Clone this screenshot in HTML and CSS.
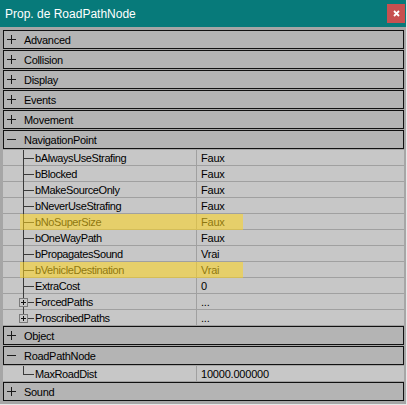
FILE: index.html
```html
<!DOCTYPE html>
<html lang="fr">
  <head>
    <meta charset="UTF-8" />
    <title>Prop. de RoadPathNode</title>
    <link rel="stylesheet" href="styles.css">
  </head>
  <body>
    <div class="window">
      <div class="titlebar">
        <span class="title">Prop. de RoadPathNode</span>
        <div class="closeBtn">
          <svg width="7" height="7" viewBox="0 0 7 7"><path d="M1 1L6 6M6 1L1 6" stroke="#fff" stroke-width="1.8"/></svg>
        </div>
      </div>

      <div class="grid">
        <div class="cat"><svg class="sign" width="9" height="9"><path d="M0 4.5H9M4.5 0V9"/></svg>Advanced</div>
        <div class="cat"><svg class="sign" width="9" height="9"><path d="M0 4.5H9M4.5 0V9"/></svg>Collision</div>
        <div class="cat"><svg class="sign" width="9" height="9"><path d="M0 4.5H9M4.5 0V9"/></svg>Display</div>
        <div class="cat"><svg class="sign" width="9" height="9"><path d="M0 4.5H9M4.5 0V9"/></svg>Events</div>
        <div class="cat"><svg class="sign" width="9" height="9"><path d="M0 4.5H9M4.5 0V9"/></svg>Movement</div>
        <div class="cat"><svg class="sign" width="9" height="9"><path d="M0 4.5H9"/></svg>NavigationPoint</div>

        <div class="prop"><div class="name">bAlwaysUseStrafing</div><div class="value">Faux</div></div>
        <div class="prop"><div class="name">bBlocked</div><div class="value">Faux</div></div>
        <div class="prop"><div class="name">bMakeSourceOnly</div><div class="value">Faux</div></div>
        <div class="prop"><div class="name">bNeverUseStrafing</div><div class="value">Faux</div></div>
        <div class="prop"><div class="name">bNoSuperSize</div><div class="value">Faux</div><span class="mark"></span></div>
        <div class="prop"><div class="name">bOneWayPath</div><div class="value">Faux</div></div>
        <div class="prop"><div class="name">bPropagatesSound</div><div class="value">Vrai</div></div>
        <div class="prop"><div class="name">bVehicleDestination</div><div class="value">Vrai</div><span class="mark"></span></div>
        <div class="prop"><div class="name">ExtraCost</div><div class="value">0</div></div>
        <div class="prop"><div class="name"><span class="expander"><svg width="5" height="5"><path d="M0 2.5H5M2.5 0V5"/></svg></span>ForcedPaths</div><div class="value">...</div></div>
        <div class="prop last"><div class="name"><span class="expander"><svg width="5" height="5"><path d="M0 2.5H5M2.5 0V5"/></svg></span>ProscribedPaths</div><div class="value">...</div></div>

        <div class="cat"><svg class="sign" width="9" height="9"><path d="M0 4.5H9M4.5 0V9"/></svg>Object</div>
        <div class="cat"><svg class="sign" width="9" height="9"><path d="M0 4.5H9"/></svg>RoadPathNode</div>

        <div class="prop last"><div class="name">MaxRoadDist</div><div class="value">10000.000000</div></div>

        <div class="cat"><svg class="sign" width="9" height="9"><path d="M0 4.5H9M4.5 0V9"/></svg>Sound</div>
      </div>
    </div>
  </body>
</html>
```

FILE: styles.css
```css
body {
  margin: 0;
  padding: 0;
  background-color: #a6a6a6;
}

.window {
  width: 407px;
  height: 405px;
  box-sizing: border-box;
  display: flex;
  flex-direction: column;
  background-color: #a6a6a6;
  border-right: 1px solid #e8e8e8;
  border-bottom: 1px solid #e8e8e8;
  font-family: 'Liberation Sans', arial, sans-serif;
  font-size: 11px;
  color: #000;
}

.titlebar {
  height: 27px;
  flex: none;
  display: flex;
  justify-content: space-between;
  align-items: flex-start;
  background-color: #077a7a;
  padding-left: 5px;
  box-sizing: border-box;
}

.title {
  font-family: 'Liberation Sans', arial, sans-serif;
  font-size: 12px;
  line-height: 27px;
  padding-top: 1px;
  color: #fff;
}

.closeBtn {
  width: 18px;
  height: 19px;
  margin-top: 4px;
  margin-right: 1px;
  background-color: #c75050;
  display: flex;
  justify-content: center;
  align-items: center;
}

.grid {
  margin: 3px 2px 0 3px;
  display: flex;
  flex-direction: column;
}

.cat {
  height: 19px;
  margin-bottom: 1px;
  box-sizing: border-box;
  border: 1px solid #111;
  background-color: #b4b4b4;
  display: flex;
  align-items: center;
  padding-left: 3px;
  gap: 8px;
  letter-spacing: -0.3px;
}

.sign {
  flex: none;
  shape-rendering: crispEdges;
}

.sign path {
  stroke: #1a1a1a;
  stroke-width: 1;
  fill: none;
}

.prop {
  position: relative;
  height: 16px;
  box-sizing: border-box;
  border-bottom: 1px solid #a0a0a0;
  background-color: #c7c7c7;
  display: grid;
  grid-template-columns: 193px 1fr;
  line-height: 15px;
}

.name,
.value {
  padding-top: 1px;
}

.name {
  position: relative;
  padding-left: 32px;
  letter-spacing: -0.4px;
  white-space: nowrap;
}

/* tree lines: vertical trunk and the branch to each item */
.name::before {
  content: '';
  position: absolute;
  left: 20px;
  top: 0;
  bottom: -1px;
  width: 1px;
  background-color: #3a3a3a;
}

.name::after {
  content: '';
  position: absolute;
  left: 20px;
  top: 8px;
  width: 11px;
  height: 1px;
  background-color: #3a3a3a;
}

.prop.last .name::before {
  bottom: 7px;
}

.expander {
  position: absolute;
  left: 16px;
  top: 4px;
  width: 9px;
  height: 9px;
  box-sizing: border-box;
  border: 1px solid #7a7a7a;
  background-color: #c7c7c7;
  display: flex;
  justify-content: center;
  align-items: center;
  z-index: 1;
}

.expander svg {
  shape-rendering: crispEdges;
}

.expander path {
  stroke: #111;
  stroke-width: 1;
}

.value {
  border-left: 1px solid #a0a0a0;
  padding-left: 4px;
  letter-spacing: -0.2px;
}

.mark {
  position: absolute;
  left: 17px;
  top: 0;
  width: 223px;
  height: 16px;
  background-color: rgba(255, 214, 30, 0.55);
  z-index: 2;
}
```
